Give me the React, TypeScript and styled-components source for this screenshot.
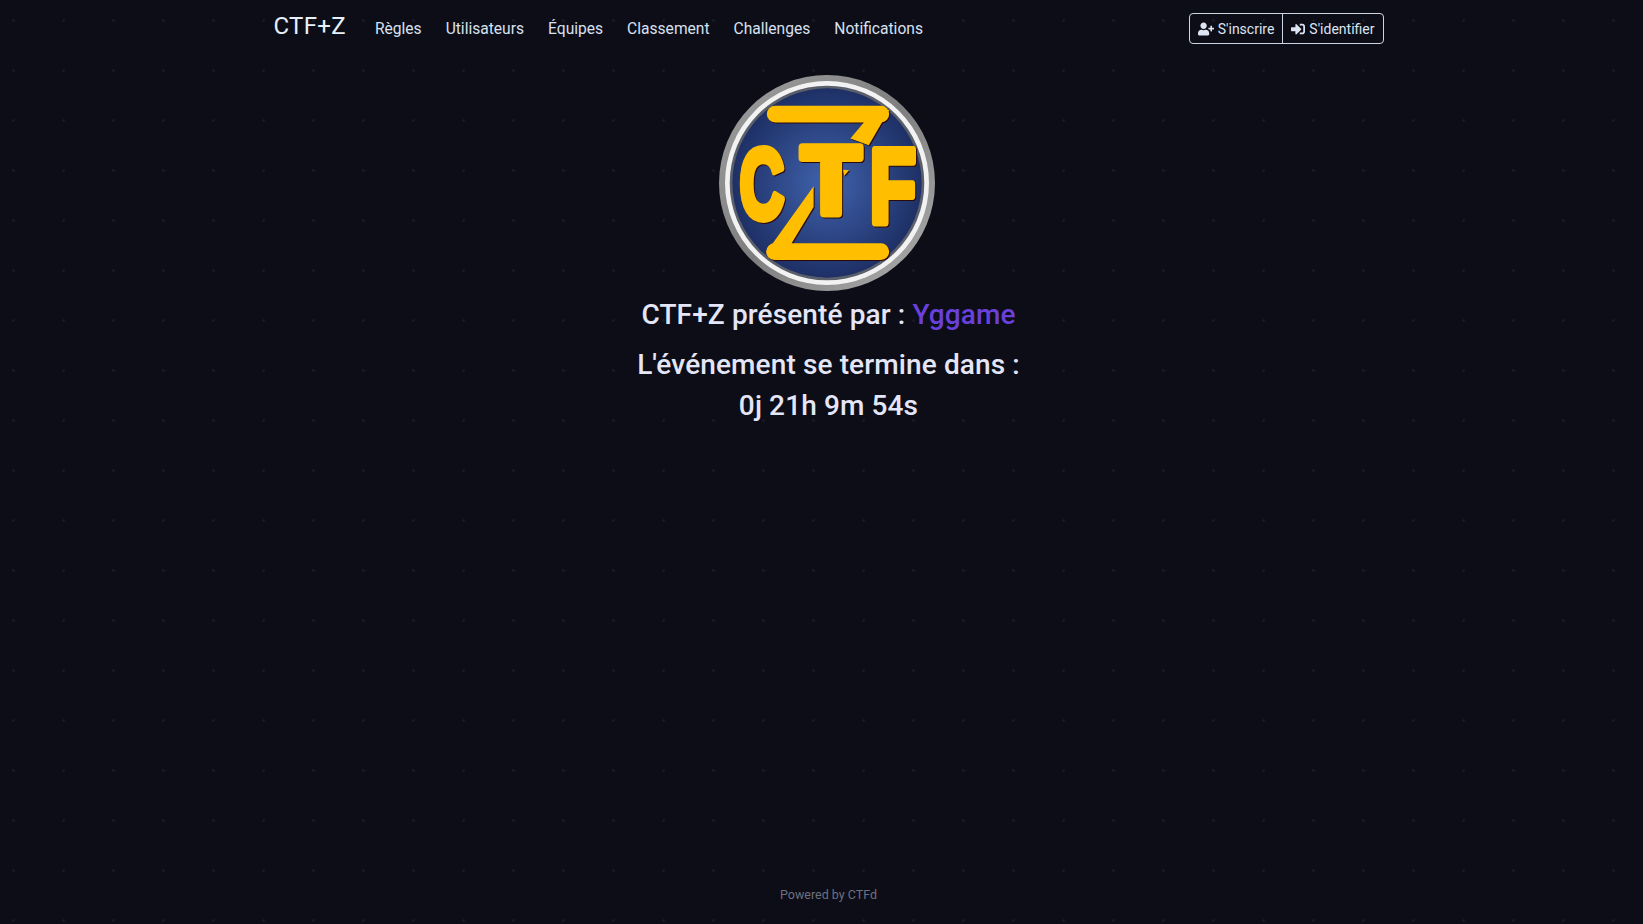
import React from "react";
import styled, { createGlobalStyle } from "styled-components";
import { FaUserPlus, FaSignInAlt } from "react-icons/fa";

const Global = createGlobalStyle`
  html, body { margin: 0; padding: 0; }
  body {
    background-color: #0c0d17;
    background-image: radial-gradient(circle at 13.5px 20.5px, #181a24 0, #181a24 1px, transparent 1.6px);
    background-size: 50px 50px;
    font-family: Roboto, "Noto Sans", sans-serif;
    color: #e4e6f8;
  }
`;

const Page = styled.div`
  min-height: 924px;
  display: flex;
  flex-direction: column;
  padding-left: 14px;
  box-sizing: border-box;
`;

const Navbar = styled.nav`
  width: 1110px;
  margin: 0 auto;
  box-sizing: border-box;
  padding-top: 13px;
  height: 54px;
  display: flex;
  align-items: flex-start;
  justify-content: space-between;
  flex: none;
`;

const Left = styled.div`
  display: flex;
  align-items: center;
  padding-top: 1px;
`;

const Brand = styled.a`
  font-size: 24px;
  line-height: 24px;
  letter-spacing: 0.3px;
  color: #e6f0fb;
  margin-right: 21px;
  position: relative;
  top: -3px;
`;

const NavLink = styled.a`
  font-size: 15.6px;
  line-height: 30px;
  color: #d9e0f0;
  padding: 0 8px;
  margin-right: 8px;
  white-space: nowrap;
`;

const Group = styled.div`
  display: flex;
  height: 31px;
  box-sizing: border-box;
  border: 1px solid #ccd3e2;
  border-radius: 4px;
`;

const GroupButton = styled.a<{ $divider?: boolean }>`
  display: flex;
  align-items: center;
  gap: 4px;
  padding: 0 8px;
  font-size: 14px;
  color: #dde4f2;
  white-space: nowrap;
  border-left: ${(p) => (p.$divider ? "1px solid #ccd3e2" : "none")};
  svg { flex: none; }
`;

const Main = styled.main`
  display: flex;
  flex-direction: column;
  align-items: center;
  padding-top: 21px;
  flex: 1;
`;

const Logo = styled.svg`
  display: block;
  width: 216px;
  height: 216px;
  margin: 0 0 7px -3px;
`;

const Shadowed = styled.g`
  filter: drop-shadow(3px 3px 0 #2a0a0a);
`;

const Heading = styled.h3<{ $gap?: number }>`
  margin: 0 0 ${(p) => p.$gap ?? 8}px;
  font-size: 28px;
  line-height: 33.6px;
  font-weight: 500;
  letter-spacing: 0.12px;
  color: #e4e6f8;
  text-align: center;
`;

const Host = styled.a`
  color: #6a40dc;
`;

const Footer = styled.footer`
  flex: none;
  height: 38px;
  text-align: center;
  font-size: 12.5px;
  line-height: 18px;
  color: #6c7080;
`;

const LogoLetter = styled.text`
  font-family: "Liberation Sans", sans-serif;
  font-weight: 700;
  stroke-linejoin: round;
  paint-order: stroke;
`;

function CtfLogo() {
  const gold = "#ffbf00";
  return (
    <Logo viewBox="57 45 646 646" role="img" aria-label="CTF+Z">
      <defs>
        <radialGradient id="disc" cx="50%" cy="50%" r="50%">
          <stop offset="0%" stopColor="#4063ad" />
          <stop offset="100%" stopColor="#1e3066" />
        </radialGradient>
        <linearGradient id="rim" x1="0" y1="0" x2="1" y2="1">
          <stop offset="0%" stopColor="#a0a0a0" />
          <stop offset="50%" stopColor="#7e7e7e" />
          <stop offset="100%" stopColor="#b0b0b0" />
        </linearGradient>
      </defs>
      <circle cx="380" cy="368" r="323" fill="url(#rim)" />
      <circle cx="380" cy="368" r="305" fill="#f2f2f2" />
      <circle cx="380" cy="368" r="291" fill="#5a5f6a" />
      <circle cx="380" cy="368" r="283" fill="url(#disc)" />
      <Shadowed>
        <g fill={gold}>
          <rect x="200" y="137" width="366" height="50" rx="25" />
          <polygon points="490,187 450,235 505,255 566,150 530,150" />
          <polygon points="340,378 340,440 272,552 205,566" />
          <rect x="198" y="548" width="368" height="50" rx="25" />
          <polygon points="428,328 446,330 432,346" />
        </g>
        <g fill={gold} stroke={gold}>
          <LogoLetter strokeWidth={24} fontSize={296} transform="translate(119 473) scale(0.62 1)">C</LogoLetter>
          <LogoLetter strokeWidth={24} fontSize={290} transform="translate(304 461) scale(1.0 1)">T</LogoLetter>
          <LogoLetter strokeWidth={24} fontSize={314} transform="translate(508 487) scale(0.72 1)">F</LogoLetter>
        </g>
      </Shadowed>
    </Logo>
  );
}

export default function App() {
  return (
    <>
      <Global />
      <Page>
        <Navbar>
          <Left>
            <Brand>CTF+Z</Brand>
            <NavLink>Règles</NavLink>
            <NavLink>Utilisateurs</NavLink>
            <NavLink>Équipes</NavLink>
            <NavLink>Classement</NavLink>
            <NavLink>Challenges</NavLink>
            <NavLink>Notifications</NavLink>
          </Left>
          <Group>
            <GroupButton><FaUserPlus size={16} /> S'inscrire</GroupButton>
            <GroupButton $divider><FaSignInAlt size={14} /> S'identifier</GroupButton>
          </Group>
        </Navbar>
        <Main>
          <CtfLogo />
          <Heading $gap={16}>CTF+Z présenté par : <Host>Yggame</Host></Heading>
          <Heading>L'événement se termine dans :</Heading>
          <Heading>0j 21h 9m 54s</Heading>
        </Main>
        <Footer>Powered by CTFd</Footer>
      </Page>
    </>
  );
}
